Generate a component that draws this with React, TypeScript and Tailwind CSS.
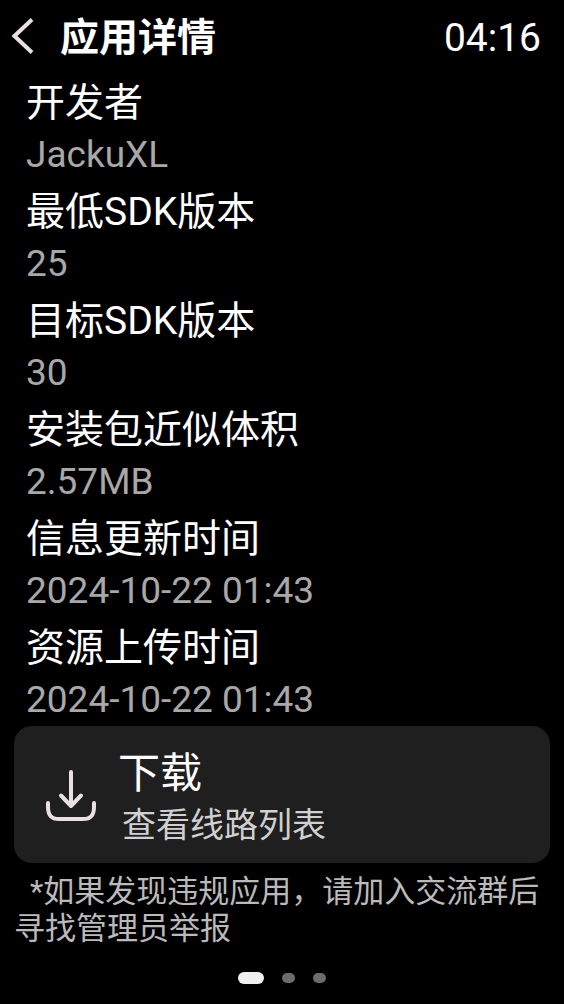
const details = [
  { label: '开发者', value: 'JackuXL' },
  { label: '最低SDK版本', value: '25' },
  { label: '目标SDK版本', value: '30' },
  { label: '安装包近似体积', value: '2.57MB' },
  { label: '信息更新时间', value: '2024-10-22 01:43' },
  { label: '资源上传时间', value: '2024-10-22 01:43' },
]

const BackIcon = () => (
  <svg className="h-9 w-6" viewBox="0 0 24 36" fill="none" aria-hidden="true">
    <path d="M20 1.5 2.5 18 20 34.5" stroke="#eadfe4" strokeWidth="4" />
  </svg>
)

const DownloadIcon = () => (
  <svg className="h-13 w-13 shrink-0" viewBox="0 0 52 52" fill="none" aria-hidden="true">
    <g stroke="#eadfe4" strokeWidth="4" strokeLinecap="round" strokeLinejoin="round">
      <path d="M25 3v34M15 26.5 25 37l10-10.5" />
      <path d="M2 34v4c0 8 3 12 11 12h24c8 0 11-4 11-12v-4" />
    </g>
  </svg>
)

const App = () => {
  return (
    <div className="flex min-h-screen flex-col bg-black font-['Roboto','Noto_Sans_CJK_SC',sans-serif] text-white">
      {/* Title bar */}
      <header className="flex h-18 items-center justify-between pr-[23px] pl-3">
        <div className="flex items-center gap-6">
          <button type="button" aria-label="返回">
            <BackIcon />
          </button>
          <h1 className="pt-1 text-[39px] leading-13 font-bold">应用详情</h1>
        </div>
        <time className="pt-1 text-[39px] leading-13">04:16</time>
      </header>

      {/* App details */}
      <dl className="flex flex-col gap-[5px] px-6.5 pt-[5px]">
        {details.map(({ label, value }) => (
          <div key={label}>
            <dt className="text-[39px] leading-13">{label}</dt>
            <dd className="text-[37px] leading-13 text-[#a8a8a8]">{value}</dd>
          </div>
        ))}
      </dl>

      {/* Download */}
      <div className="px-3.5">
        <button
          type="button"
          className="flex h-[137px] w-full items-center gap-5 rounded-[18px] bg-[#1f1f1f] pl-8 text-left"
        >
          <DownloadIcon />
          <span className="flex flex-col pt-2">
            <span className="text-[42px] leading-13">下载</span>
            <span className="pl-1 text-[34px] leading-[50px] text-[#d0d0d0]">查看线路列表</span>
          </span>
        </button>
        <p className="pt-2.5 indent-4 text-[31px] leading-[37px] text-[#bababa]">
          *如果发现违规应用，请加入交流群后寻找管理员举报
        </p>
      </div>

      {/* Page dots */}
      <div className="mt-auto flex items-center justify-center gap-[18px] pb-5">
        <span className="h-3 w-[26px] rounded-full bg-[#f0f0f0]" />
        <span className="h-2.5 w-[13px] rounded-full bg-[#6c6c6c]" />
        <span className="h-2.5 w-[13px] rounded-full bg-[#6c6c6c]" />
      </div>
    </div>
  )
}

export default App
